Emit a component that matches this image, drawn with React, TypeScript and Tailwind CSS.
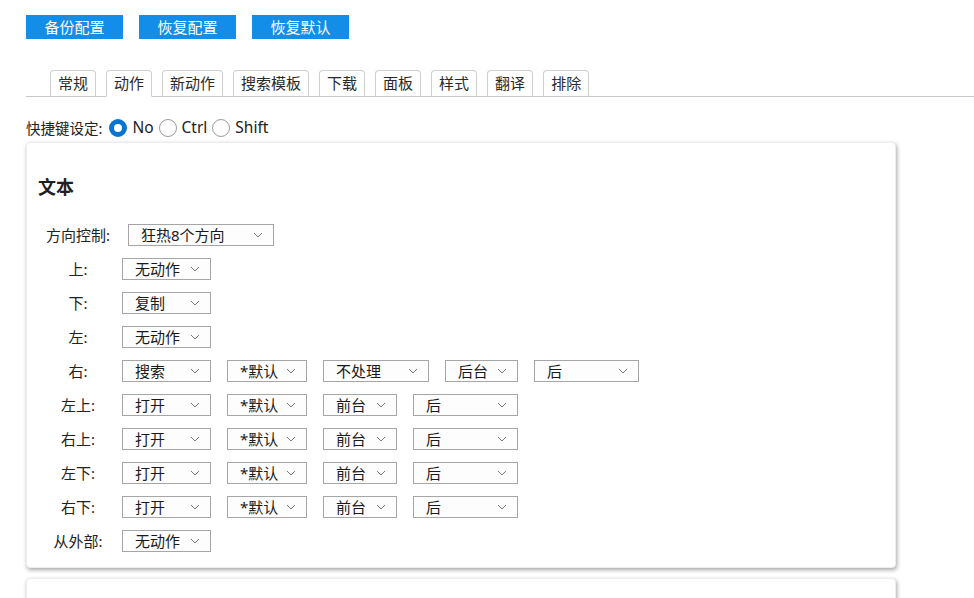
import React from "react";

const FONT = "font-['Noto_Sans','Noto_Sans_CJK_SC',sans-serif]";

const tabs = ["常规", "动作", "新动作", "搜索模板", "下载", "面板", "样式", "翻译", "排除"];

type Sel = { text: string; w: number };

const rows: { label: string; selects: Sel[] }[] = [
  { label: "上:", selects: [{ text: "无动作", w: 89 }] },
  { label: "下:", selects: [{ text: "复制", w: 89 }] },
  { label: "左:", selects: [{ text: "无动作", w: 89 }] },
  {
    label: "右:",
    selects: [
      { text: "搜索", w: 89 },
      { text: "*默认", w: 80 },
      { text: "不处理", w: 106 },
      { text: "后台", w: 73 },
      { text: "后", w: 105 },
    ],
  },
  ...["左上:", "右上:", "左下:", "右下:"].map((label) => ({
    label,
    selects: [
      { text: "打开", w: 89 },
      { text: "*默认", w: 80 },
      { text: "前台", w: 74 },
      { text: "后", w: 105 },
    ],
  })),
  { label: "从外部:", selects: [{ text: "无动作", w: 89 }] },
];

function Chevron() {
  return (
    <svg width="10" height="6" viewBox="0 0 10 6" className="shrink-0">
      <path d="M1 1 L5 5 L9 1" fill="none" stroke="#7a7a7a" strokeWidth="1" />
    </svg>
  );
}

function Select({ text, w }: Sel) {
  return (
    <div
      className="h-[22px] border border-[#a6a6a6] bg-[#fdfdfd] flex items-center justify-between pl-[12px] pr-[10px] text-[15px] leading-none text-[#1a1a1a] shrink-0"
      style={{ width: w }}
    >
      <span>{text}</span>
      <Chevron />
    </div>
  );
}

function Radio({ checked, label }: { checked?: boolean; label: string }) {
  return (
    <label className="flex items-center gap-[5px]">
      {checked ? (
        <span className="w-[18px] h-[18px] rounded-full border-[5px] border-[#0a74d1] bg-white" />
      ) : (
        <span className="w-[18px] h-[18px] rounded-full border border-[#9a9a9a] bg-white" />
      )}
      <span className="text-[15.5px] leading-none text-[#222]">{label}</span>
    </label>
  );
}

export default function App() {
  return (
    <div className={`${FONT} min-h-[598px] bg-white text-[#222] pt-[15px] pl-[26px] overflow-hidden`}>
      {/* top buttons */}
      <div className="flex gap-[16px]">
        {["备份配置", "恢复配置", "恢复默认"].map((t) => (
          <button
            key={t}
            className="w-[97px] h-[24px] bg-[#138ee8] text-white text-[15px] leading-none flex items-center justify-center"
          >
            {t}
          </button>
        ))}
      </div>

      {/* tabs */}
      <div className="mt-[30px] flex gap-[10px] pl-[24px] border-b border-[#c8c8c8] h-[28px] items-end">
        {tabs.map((t, i) => (
          <div
            key={t}
            className={`h-[27px] px-[7px] border border-[#cfcfcf] rounded-t-[4px] flex items-center text-[15px] leading-none text-[#2a2a2a] -mb-px ${
              i === 1 ? "border-b-white bg-white" : "border-b-[#c8c8c8]"
            }`}
          >
            {t}
          </div>
        ))}
      </div>

      {/* hotkey radios */}
      <div className="mt-[21px] flex items-center gap-[5px] h-[20px]">
        <span className="text-[14.5px] leading-none text-[#222] mr-[2px]">快捷键设定:</span>
        <Radio checked label="No" />
        <Radio label="Ctrl" />
        <Radio label="Shift" />
      </div>

      {/* card */}
      <div className="mt-[4px] w-[870px] h-[426px] bg-white rounded-[4px] border border-[#ececec] shadow-[1px_2px_4px_rgba(0,0,0,0.35)] pl-[11px]">
        <h3 className="mt-[34px] text-[18px] font-bold leading-[20px] text-[#1f1f1f]">文本</h3>

        <div className="mt-[27px] flex items-center h-[22px]">
          <span className="w-[80px] text-center text-[15px] leading-none">方向控制:</span>
          <div className="ml-[10px]">
            <Select text="狂热8个方向" w={146} />
          </div>
        </div>

        <div className="mt-[12px] flex flex-col gap-[12px]">
          {rows.map((r) => (
            <div key={r.label} className="flex items-center h-[22px]">
              <span className="w-[80px] text-center text-[15px] leading-none">{r.label}</span>
              <div className="ml-[4px] flex gap-[16px]">
                {r.selects.map((s, i) => (
                  <Select key={i} {...s} />
                ))}
              </div>
            </div>
          ))}
        </div>
      </div>

      {/* second card, cut off */}
      <div className="mt-[10px] w-[870px] h-[60px] bg-white rounded-[4px] border border-[#ececec] shadow-[1px_2px_4px_rgba(0,0,0,0.35)]" />
    </div>
  );
}
